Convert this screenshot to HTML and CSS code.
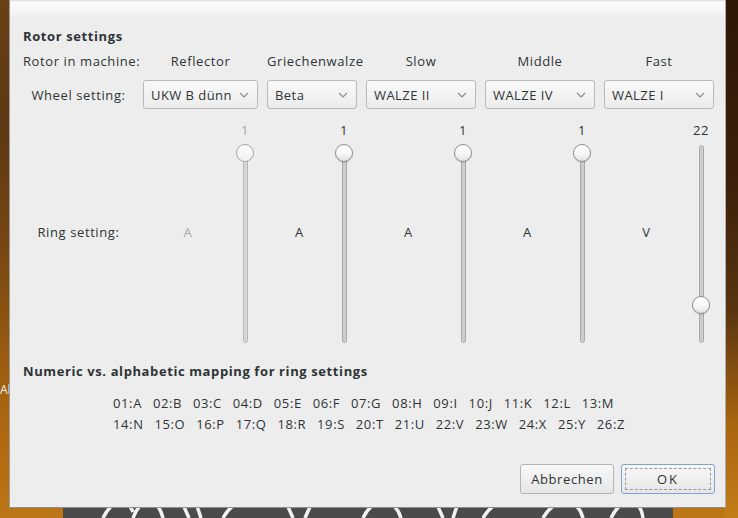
FILE: index.html
```html
<!DOCTYPE html>
<html lang="de">
<head>
<meta charset="utf-8">
<title>Rotor settings</title>
<link rel="stylesheet" href="styles.css">
</head>
<body>
<div class="desktop">
  <div class="bg-text">Ab</div>
  <div class="banner">
    <svg width="610" height="20" viewBox="0 0 610 20">
      <g fill="none" stroke="#f2f2f2" stroke-width="3.5">
        <path d="M40 20 Q48 4 58 4 Q66 4 70 14"/>
        <path d="M70 20 Q76 4 86 4 Q96 4 100 20"/>
        <path d="M118 2 L126 20 M132 2 L138 20"/>
        <path d="M160 20 Q170 2 185 4"/>
        <path d="M222 2 L230 20 M250 2 L242 20"/>
        <path d="M300 20 Q308 3 322 4 Q334 6 338 20"/>
        <path d="M372 2 L380 20 M396 2 L390 20"/>
        <path d="M420 20 Q430 3 444 4"/>
        <path d="M480 20 Q490 3 504 4 Q516 5 520 20"/>
        <path d="M548 20 Q556 4 566 4 Q578 4 580 20"/>
      </g>
    </svg>
  </div>
  <div class="dialog">
    <h2 class="section-title">Rotor settings</h2>
    <div class="rotor-grid">
      <div class="row-label">Rotor in machine:</div>
      <div class="col-head">Reflector</div>
      <div class="col-head">Griechenwalze</div>
      <div class="col-head">Slow</div>
      <div class="col-head">Middle</div>
      <div class="col-head">Fast</div>

      <div class="row-label centered">Wheel setting:</div>
      <div class="combo"><span class="combo-text">UKW B dünn</span><svg class="chev" width="10" height="6" viewBox="0 0 10 6"><path d="M1 1 L5 5 L9 1" fill="none" stroke="#8c8c8c" stroke-width="1.2"/></svg></div>
      <div class="combo"><span class="combo-text">Beta</span><svg class="chev" width="10" height="6" viewBox="0 0 10 6"><path d="M1 1 L5 5 L9 1" fill="none" stroke="#8c8c8c" stroke-width="1.2"/></svg></div>
      <div class="combo"><span class="combo-text">WALZE II</span><svg class="chev" width="10" height="6" viewBox="0 0 10 6"><path d="M1 1 L5 5 L9 1" fill="none" stroke="#8c8c8c" stroke-width="1.2"/></svg></div>
      <div class="combo"><span class="combo-text">WALZE IV</span><svg class="chev" width="10" height="6" viewBox="0 0 10 6"><path d="M1 1 L5 5 L9 1" fill="none" stroke="#8c8c8c" stroke-width="1.2"/></svg></div>
      <div class="combo"><span class="combo-text">WALZE I</span><svg class="chev" width="10" height="6" viewBox="0 0 10 6"><path d="M1 1 L5 5 L9 1" fill="none" stroke="#8c8c8c" stroke-width="1.2"/></svg></div>

      <div class="row-label centered ring-label">Ring setting:</div>
      <div class="ring-cell disabled">
        <span class="ring-letter">A</span>
        <div class="slider"><span class="slider-value">1</span><div class="track-area"><div class="track"></div><span class="thumb" style="top:0px"></span></div></div>
      </div>
      <div class="ring-cell">
        <span class="ring-letter">A</span>
        <div class="slider"><span class="slider-value">1</span><div class="track-area"><div class="track"></div><span class="thumb" style="top:0px"></span></div></div>
      </div>
      <div class="ring-cell">
        <span class="ring-letter">A</span>
        <div class="slider"><span class="slider-value">1</span><div class="track-area"><div class="track"></div><span class="thumb" style="top:0px"></span></div></div>
      </div>
      <div class="ring-cell">
        <span class="ring-letter">A</span>
        <div class="slider"><span class="slider-value">1</span><div class="track-area"><div class="track"></div><span class="thumb" style="top:0px"></span></div></div>
      </div>
      <div class="ring-cell">
        <span class="ring-letter">V</span>
        <div class="slider"><span class="slider-value">22</span><div class="track-area"><div class="track"></div><span class="thumb" style="top:152px"></span></div></div>
      </div>
    </div>

    <h2 class="section-title mapping-title">Numeric vs. alphabetic mapping for ring settings</h2>
    <div class="mapping">
      <div class="mapping-block">
        <div class="mapping-line">01:A  02:B  03:C  04:D  05:E  06:F  07:G  08:H  09:I  10:J  11:K  12:L  13:M</div>
        <div class="mapping-line">14:N  15:O  16:P  17:Q  18:R  19:S  20:T  21:U  22:V  23:W  24:X  25:Y  26:Z</div>
      </div>
    </div>

    <div class="buttons">
      <button class="btn">Abbrechen</button>
      <button class="btn btn-default"><span class="focus">OK</span></button>
    </div>
  </div>
</div>
</body>
</html>
```

FILE: styles.css
```css
html, body {
  margin: 0;
  padding: 0;
}

body {
  width: 738px;
  height: 518px;
  overflow: hidden;
  font-family: "Open Sans", "DejaVu Sans", sans-serif;
  font-size: 13px;
  letter-spacing: 0.6px;
  color: #2e3436;
}

.desktop {
  position: relative;
  width: 738px;
  height: 518px;
  overflow: hidden;
  background:
    linear-gradient(180deg, #2e1707 0%, #3c200b 35%, #5a3410 60%, #a8650f 82%, #c27c18 100%) right top / 14px 100% no-repeat,
    linear-gradient(180deg, #6a4016 0%, #5e3813 25%, #7a4812 50%, #a8640f 78%, #bd7616 100%);
}

.bg-text {
  position: absolute;
  left: 0;
  top: 381px;
  color: #eeeeee;
  font-size: 12px;
  letter-spacing: 0;
}

.banner {
  position: absolute;
  left: 63px;
  top: 498px;
  width: 610px;
  height: 20px;
  background: #4b4b4b;
}

.banner svg {
  display: block;
}

.dialog {
  position: absolute;
  left: 9px;
  top: 0;
  width: 692px;
  padding: 27px 10px 13px 13px;
  border-left: 1px solid #9c9c9c;
  border-right: 1px solid #b0b0b0;
  border-bottom: 1px solid #8e8e8e;
  background: linear-gradient(180deg, #d8d8d8 0, #fbfbfb 2px, #f8f8f8 8px, #ededed 18px, #ededed 100%);
}

.section-title {
  margin: 0 0 7px 0;
  font-size: 13px;
  font-weight: 700;
  line-height: 18px;
  color: #2e3436;
}

.rotor-grid {
  display: grid;
  grid-template-columns: 111px 115px 90px 110px 110px 110px;
  grid-template-rows: 18px 29px 224px;
  column-gap: 9px;
  row-gap: 10px;
}

.ring-cell,
.ring-label {
  margin-top: 2px;
}

.row-label {
  line-height: 18px;
  white-space: nowrap;
  align-self: center;
}

.row-label.centered {
  text-align: center;
}

.col-head {
  text-align: center;
  line-height: 18px;
  white-space: nowrap;
}

.combo {
  display: flex;
  align-items: center;
  box-sizing: border-box;
  height: 29px;
  padding: 0 8px 0 7px;
  border: 1px solid #b9b9b9;
  border-radius: 3px;
  background: linear-gradient(180deg, #f9f9f9 0%, #ececec 100%);
}

.combo-text {
  flex: 1;
  overflow: hidden;
  white-space: nowrap;
  letter-spacing: 0.45px;
}

.chev {
  flex: none;
  margin-left: 3px;
}

.ring-cell {
  display: flex;
  align-items: center;
}

.ring-letter {
  flex: 1;
  text-align: center;
  line-height: 18px;
}

.slider {
  display: flex;
  flex-direction: column;
  align-items: center;
  width: 24px;
  margin-right: 1px;
  gap: 5px;
}

.slider-value {
  line-height: 18px;
  white-space: nowrap;
}

.track-area {
  position: relative;
  width: 24px;
  height: 199px;
}

.track {
  box-sizing: border-box;
  width: 5px;
  height: 198px;
  margin: 1px auto 0;
  border: 1px solid #a9a9a9;
  border-radius: 3px;
  background: #cdcdcd;
}

.thumb {
  position: absolute;
  left: 3px;
  box-sizing: border-box;
  width: 18px;
  height: 18px;
  border-radius: 50%;
  border: 1px solid #8f8f8f;
  background: linear-gradient(180deg, #ffffff 0%, #f6f6f6 55%, #e2e2e2 100%);
  box-shadow: 0 1px 1px rgba(0,0,0,0.12);
}

.disabled .ring-letter,
.disabled .slider-value {
  color: #a8a8a8;
}

.disabled .thumb {
  border-color: #a9a9a9;
  background: linear-gradient(180deg, #fbfbfb 0%, #f1f1f1 100%);
  box-shadow: none;
}

.disabled .track {
  border-color: #b8b8b8;
  background: #d6d6d6;
}

.mapping-title {
  margin: 19px 0 13px 0;
}

.mapping {
  display: flex;
  justify-content: center;
}

.mapping-block {
  display: flex;
  flex-direction: column;
}

.mapping-line {
  white-space: pre;
  line-height: 21px;
  word-spacing: 1.5px;
}

.buttons {
  display: flex;
  justify-content: flex-end;
  gap: 7px;
  margin-top: 29px;
}

.btn {
  box-sizing: border-box;
  width: 94px;
  height: 30px;
  padding: 0;
  border: 1px solid #b4b4b4;
  border-radius: 3px;
  background: linear-gradient(180deg, #f8f8f8 0%, #e6e6e6 100%);
  font-family: inherit;
  font-size: 13px;
  letter-spacing: 0.6px;
  color: #2e3436;
}

.btn-default {
  padding: 3px;
  border-color: #7fa4d3;
}

.focus {
  display: flex;
  align-items: center;
  justify-content: center;
  box-sizing: border-box;
  height: 100%;
  border: 1px dashed #9a9a9a;
  letter-spacing: 2px;
}
```
